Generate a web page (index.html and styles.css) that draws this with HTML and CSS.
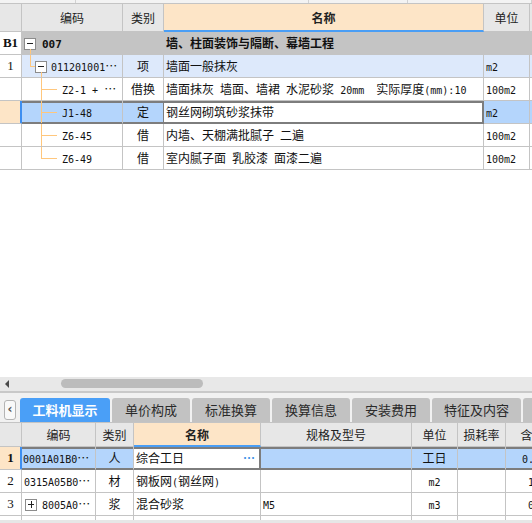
FILE: index.html
```html
<!DOCTYPE html>
<html lang="zh-CN">
<head>
<meta charset="utf-8">
<title>工料机</title>
<link rel="stylesheet" href="styles.css">
</head>
<body>
<div class="app">
  <div class="upper">
    <div class="strip"><span></span><span></span><span></span><span></span></div>
    <div class="grid top-grid">
      <div class="c h"></div>
      <div class="c h">编码</div>
      <div class="c h">类别</div>
      <div class="c h hl">名称</div>
      <div class="c h">单位</div>
      <div class="c h"></div>

      <div class="c idx b">B1</div>
      <div class="c g code"><span class="tb minus lv0"></span><span class="ln v" style="left:8px;top:17px;height:7px"></span><b class="m bm">007</b></div>
      <div class="c g"></div>
      <div class="c g b">墙、柱面装饰与隔断、幕墙工程</div>
      <div class="c g"></div>
      <div class="c g"></div>

      <div class="c idx">1</div>
      <div class="c lb code"><span class="ln v" style="left:8px;top:0;height:11px"></span><span class="ln hz" style="left:8px;top:11px;width:5px"></span><span class="tb minus lv1"></span><span class="ln v" style="left:19px;top:17px;height:6px"></span><span class="m">011201001</span>…</div>
      <div class="c lb ctr">项</div>
      <div class="c lb">墙面一般抹灰</div>
      <div class="c lb"><span class="m">m2</span></div>
      <div class="c lb"></div>

      <div class="c idx"></div>
      <div class="c code child"><span class="ln v" style="left:19px;top:0;height:23px"></span><span class="ln hz" style="left:19px;top:11px;width:16px"></span><span class="m">Z2-1 + </span>…</div>
      <div class="c ctr">借换</div>
      <div class="c">墙面抹灰<span class="m"> </span>墙面、墙裙<span class="m"> </span>水泥砂浆<span class="m"> 20mm  </span>实际厚度<span class="m">(mm):10</span></div>
      <div class="c"><span class="m">100m2</span></div>
      <div class="c"></div>

      <div class="c idx cursor"></div>
      <div class="c code child sel"><span class="ln v" style="left:19px;top:0;height:23px"></span><span class="ln hz" style="left:19px;top:11px;width:16px"></span><span class="m">J1-48</span></div>
      <div class="c ctr sel dr">定</div>
      <div class="c cur">钢丝网砌筑砂浆抹带</div>
      <div class="c selb"><span class="m">m2</span></div>
      <div class="c selb"></div>

      <div class="c idx"></div>
      <div class="c code child"><span class="ln v" style="left:19px;top:0;height:23px"></span><span class="ln hz" style="left:19px;top:11px;width:16px"></span><span class="m">Z6-45</span></div>
      <div class="c ctr">借</div>
      <div class="c">内墙、天棚满批腻子<span class="m"> </span>二遍</div>
      <div class="c"><span class="m">100m2</span></div>
      <div class="c"></div>

      <div class="c idx"></div>
      <div class="c code child"><span class="ln v" style="left:19px;top:0;height:12px"></span><span class="ln hz" style="left:19px;top:11px;width:16px"></span><span class="m">Z6-49</span></div>
      <div class="c ctr">借</div>
      <div class="c">室内腻子面<span class="m"> </span>乳胶漆<span class="m"> </span>面漆二遍</div>
      <div class="c"><span class="m">100m2</span></div>
      <div class="c"></div>
    </div>
  </div>

  <div class="hscroll"><span class="arr"></span><span class="thumb"></span></div>

  <div class="tabbar">
    <div class="back">&lsaquo;</div>
    <div class="tab on">工料机显示</div>
    <div class="tab">单价构成</div>
    <div class="tab">标准换算</div>
    <div class="tab">换算信息</div>
    <div class="tab">安装费用</div>
    <div class="tab wide">特征及内容</div>
    <div class="tab"></div>
  </div>

  <div class="lower">
    <div class="grid bottom-grid">
      <div class="c h"></div>
      <div class="c h">编码</div>
      <div class="c h">类别</div>
      <div class="c h hl">名称</div>
      <div class="c h">规格及型号</div>
      <div class="c h">单位</div>
      <div class="c h">损耗率</div>
      <div class="c h">含量</div>

      <div class="c idx cursor b">1</div>
      <div class="c sel tight"><span class="m">0001A01B0</span>…</div>
      <div class="c sel ctr">人</div>
      <div class="c cur">综合工日<span class="more">…</span></div>
      <div class="c sel"></div>
      <div class="c sel ctr">工日</div>
      <div class="c sel"></div>
      <div class="c sel num"><span class="m">0.</span></div>

      <div class="c idx">2</div>
      <div class="c tight2"><span class="m">0315A05B0</span>…</div>
      <div class="c ctr">材</div>
      <div class="c">钢板网<span class="m">(</span>钢丝网<span class="m">)</span></div>
      <div class="c"></div>
      <div class="c ctr"><span class="m">m2</span></div>
      <div class="c"></div>
      <div class="c num2"><span class="m">1</span></div>

      <div class="c idx">3</div>
      <div class="c code"><span class="tb plus lv0 gap"></span><span class="m">8005A0</span>…</div>
      <div class="c ctr">浆</div>
      <div class="c">混合砂浆</div>
      <div class="c"><span class="m">M5</span></div>
      <div class="c ctr"><span class="m">m3</span></div>
      <div class="c"></div>
      <div class="c num2"><span class="m">0</span></div>

      <div class="c idx"></div>
      <div class="c"></div>
      <div class="c"></div>
      <div class="c"></div>
      <div class="c"></div>
      <div class="c"></div>
      <div class="c"></div>
      <div class="c"></div>
    </div>
    <div class="bbar"></div>
  </div>
</div>
</body>
</html>
```

FILE: styles.css
```css
* {
  box-sizing: border-box;
  margin: 0;
  padding: 0;
}

html,
body {
  width: 532px;
  height: 523px;
  overflow: hidden;
  background: #ffffff;
}

body {
  font-family: "Noto Sans CJK SC", "Noto Sans", sans-serif;
  font-size: 12px;
  color: #111111;
}

.app {
  display: flex;
  flex-direction: column;
  width: 532px;
  height: 523px;
  overflow: hidden;
}

.upper {
  flex: none;
  height: 377px;
  overflow: hidden;
  background: #ffffff;
}

.strip {
  display: grid;
  grid-template-columns: 76px 233px 99px 1fr;
  height: 4px;
  background: #f3f3f3;
  border-bottom: 1px solid #c4c4c4;
}

.strip span {
  border-right: 1px solid #d2d2d2;
}

.grid {
  display: grid;
  width: max-content;
}

.top-grid {
  grid-template-columns: 22px 101px 41px 320px 46px 40px;
  grid-template-rows: 28px repeat(6, 23px);
}

.c {
  position: relative;
  display: block;
  border-right: 1px solid #c4c4c4;
  border-bottom: 1px solid #c4c4c4;
  padding: 0 2px;
  line-height: 22px;
  white-space: nowrap;
  overflow: hidden;
}

.h {
  background: #e7e7e7;
  text-align: center;
  color: #222222;
  line-height: 27px;
}

.h.hl {
  background: #fde5c7;
  font-weight: bold;
  border-bottom: 2px solid #4a9ef5;
}

.m {
  font-family: "DejaVu Sans Mono", monospace;
  font-size: 10px;
  white-space: pre;
}

.bm {
  font-size: 11px;
  font-weight: bold;
  margin-left: 4px;
}

.b {
  font-weight: bold;
}

.idx {
  font-family: "Liberation Serif", serif;
  font-size: 13px;
  text-align: center;
  background: #ffffff;
  padding: 0;
}

.g {
  background: #c4c4c4;
}

.lb {
  background: #dde9fb;
}

.ctr {
  text-align: center;
}

.code {
  padding-left: 2px;
}

.child {
  padding-left: 40px;
}

.tb {
  position: relative;
  display: inline-block;
  width: 12px;
  height: 12px;
  border: 1px solid #8c8c8c;
  background: #ffffff;
  vertical-align: -2px;
}

.tb::before {
  content: "";
  position: absolute;
  left: 2px;
  top: 4px;
  width: 6px;
  height: 1px;
  background: #222222;
}

.tb.plus::after {
  content: "";
  position: absolute;
  left: 4.5px;
  top: 1px;
  width: 1px;
  height: 7px;
  background: #222222;
}

.tb.lv1 {
  margin-left: 11px;
  margin-right: 4px;
}

.tb.lv0 {
  margin-right: 2px;
}

.tb.gap {
  margin-left: 1px;
  margin-right: 5px;
}

.ln {
  position: absolute;
  background: #ffc77d;
}

.ln.v {
  width: 1px;
}

.ln.hz {
  height: 1px;
}

.cursor {
  background: #fde5c7;
  border-right: 1px solid #3d8ef0;
  box-shadow: inset -1px 0 0 #3d8ef0;
}

.sel {
  background: #b4d5fc;
  border-bottom-color: #7d7d7d;
  box-shadow: inset 0 2px 0 #7d7d7d, inset 0 -1px 0 #7d7d7d;
}

.sel.dr {
  border-right-color: #7d7d7d;
}

.selb {
  background: #b4d5fc;
}

.cur {
  background: #ffffff;
  border-right-color: #7d7d7d;
  border-bottom-color: #7d7d7d;
  box-shadow: inset 0 2px 0 #7d7d7d, inset 0 -1px 0 #7d7d7d, inset -1px 0 0 #7d7d7d;
}

.more {
  float: right;
  margin-right: 3px;
  color: #3b8ee6;
  font-weight: bold;
}

.hscroll {
  flex: none;
  display: flex;
  align-items: center;
  height: 16px;
  padding-bottom: 1px;
  background: #e8e8e8;
  border-bottom: 2px solid #c9c9c9;
}

.arr {
  width: 0;
  height: 0;
  margin-left: 5px;
  border-top: 4px solid transparent;
  border-bottom: 4px solid transparent;
  border-right: 4px solid #4a4a4a;
}

.thumb {
  width: 142px;
  height: 9px;
  margin-left: 52px;
  background: #bcbcbc;
  border-radius: 5px;
}

.tabbar {
  flex: none;
  display: flex;
  align-items: flex-end;
  gap: 2px;
  height: 29px;
  padding: 5px 0 0 4px;
  background: #f1f1f1;
  overflow: hidden;
}

.back {
  flex: none;
  width: 12px;
  height: 20px;
  margin: 0 2px 2px 0;
  border: 1px solid #b4b4b4;
  border-radius: 3px;
  background: #f9f9f9;
  color: #555555;
  font-family: "DejaVu Sans", sans-serif;
  font-size: 12px;
  font-weight: bold;
  line-height: 17px;
  text-align: center;
}

.tab {
  flex: none;
  width: 78px;
  height: 24px;
  border-radius: 3px 3px 0 0;
  background: #c2c2c2;
  color: #2a2a2a;
  font-size: 13px;
  line-height: 24px;
  text-align: center;
}

.tab.on {
  width: 90px;
  background: #4a9ff7;
  color: #ffffff;
  font-weight: bold;
}

.tab.wide {
  width: 89px;
}

.lower {
  flex: none;
  display: flex;
  flex-direction: column;
  height: 101px;
  overflow: hidden;
}

.bottom-grid {
  flex: 1;
  grid-template-columns: 22px 74px 38px 127px 151px 46px 48px 54px;
  grid-template-rows: 24px repeat(4, 23px);
  border-top: 1px solid #c4c4c4;
  overflow: hidden;
}

.bottom-grid .h {
  line-height: 23px;
}

.tight {
  padding-left: 1px;
}

.tight2 {
  padding-left: 2px;
}

.num {
  padding-left: 16px;
}

.num2 {
  padding-left: 22px;
}

.bbar {
  flex: none;
  height: 3px;
  background: #e6e6e6;
}
```
